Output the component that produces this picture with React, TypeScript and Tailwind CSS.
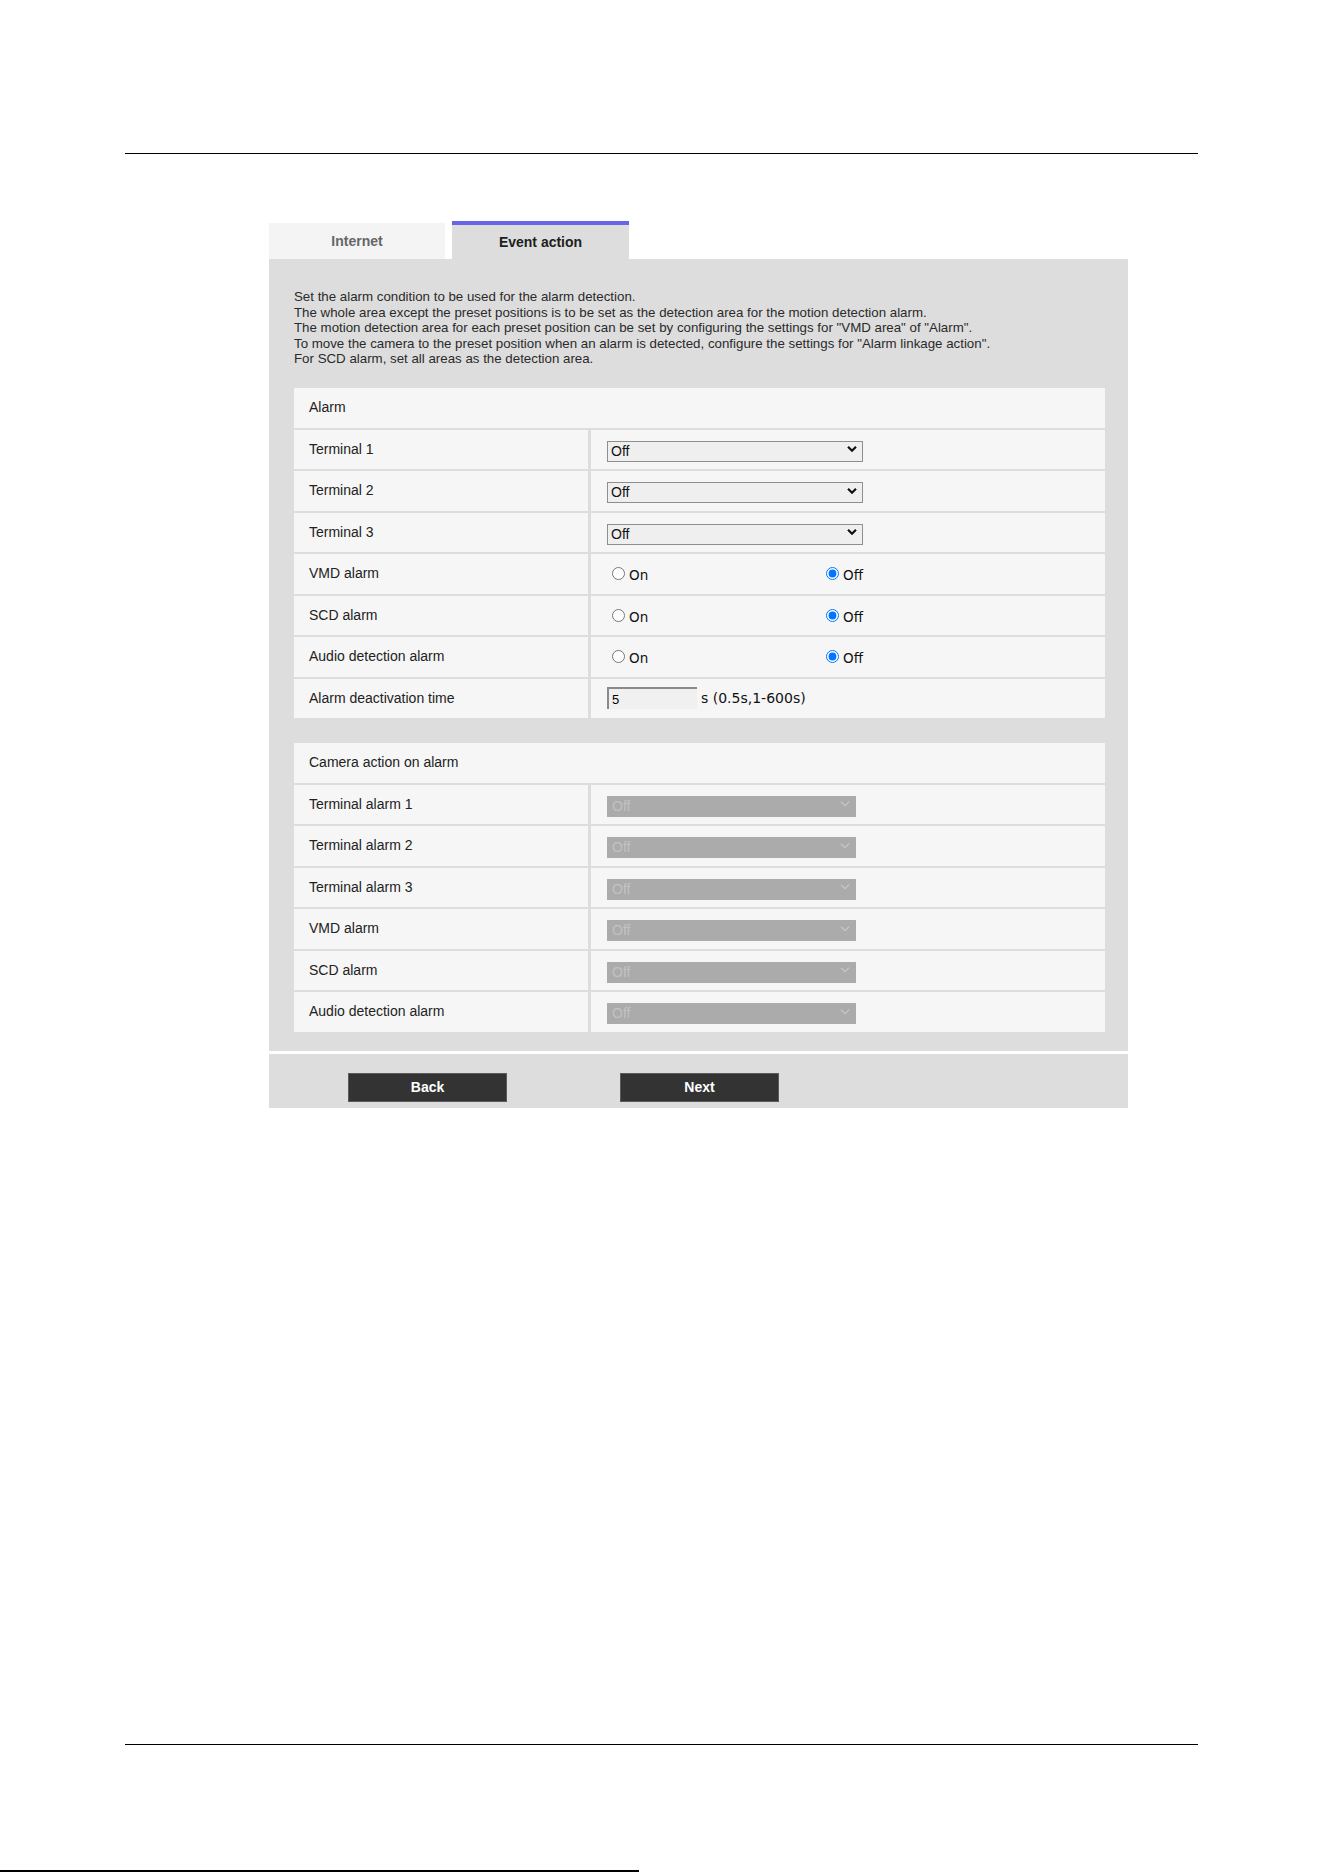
import type { ReactNode } from 'react'

const sans = 'font-["Liberation_Sans",Arial,sans-serif]'
const wide = 'font-["DejaVu_Sans",Verdana,sans-serif]'

const notes = [
  'Set the alarm condition to be used for the alarm detection.',
  'The whole area except the preset positions is to be set as the detection area for the motion detection alarm.',
  'The motion detection area for each preset position can be set by configuring the settings for "VMD area" of "Alarm".',
  'To move the camera to the preset position when an alarm is detected, configure the settings for "Alarm linkage action".',
  'For SCD alarm, set all areas as the detection area.',
]

function Chevron({ disabled }: { disabled?: boolean }) {
  return (
    <svg
      width="10"
      height="7"
      viewBox="0 0 10 7"
      className="pointer-events-none absolute top-1/2 -translate-y-1/2 right-[6px]"
    >
      <path
        d="M1 1.2 L5 5.2 L9 1.2"
        fill="none"
        stroke={disabled ? '#c6c6c6' : '#111'}
        strokeWidth={disabled ? 1.3 : 2.2}
      />
    </svg>
  )
}

function Select({ disabled }: { disabled?: boolean }) {
  if (disabled) {
    return (
      <div className="relative w-[249px] h-[21px]">
        <select
          disabled
          className={`${sans} appearance-none w-full h-full bg-[#ababab] text-[#c2c2c2] text-[14px] leading-[19px] pl-[5px] border-0 outline-none`}
        >
          <option>Off</option>
        </select>
        <Chevron disabled />
      </div>
    )
  }
  return (
    <div className="relative w-[256px] h-[21px]">
      <select
        className={`${sans} appearance-none w-full h-full bg-[#efefef] text-[#111] text-[14px] leading-[19px] pl-[3px] border border-[#8e8e8e] outline-none`}
      >
        <option>Off</option>
        <option>On</option>
      </select>
      <Chevron />
    </div>
  )
}

function OnOff({ name }: { name: string }) {
  return (
    <div className={`${wide} grid grid-cols-[214px_214px] text-[13.5px] text-[#111] pl-[5px]`}>
      <label className="flex items-center gap-[4px]">
        <input type="radio" name={name} className="m-0 w-[13px] h-[13px]" />
        <span className="pt-[3px]">On</span>
      </label>
      <label className="flex items-center gap-[4px]">
        <input type="radio" name={name} defaultChecked className="m-0 w-[13px] h-[13px]" />
        <span className="pt-[3px]">Off</span>
      </label>
    </div>
  )
}

function Row({ label, children }: { label: string; children: ReactNode }) {
  return (
    <div className="flex gap-[3px] h-[39.5px]">
      <div className="w-[294px] bg-[#f6f6f6] flex items-center pl-[15px] text-[14px] text-[#222]">
        {label}
      </div>
      <div className="flex-1 bg-[#f6f6f6] flex items-center pl-[16px]">{children}</div>
    </div>
  )
}

function Section({ title, children }: { title: string; children: ReactNode }) {
  return (
    <div className={`${sans} flex flex-col gap-[2px]`}>
      <div className="h-[39.5px] bg-[#f6f6f6] flex items-center pl-[15px] text-[14px] text-[#222]">
        {title}
      </div>
      {children}
    </div>
  )
}

export default function App() {
  const cameraRows = [
    'Terminal alarm 1',
    'Terminal alarm 2',
    'Terminal alarm 3',
    'VMD alarm',
    'SCD alarm',
    'Audio detection alarm',
  ]

  return (
    <div className={`${sans} bg-white w-[1323px] h-[1872px] pt-[153px]`}>
      {/* page rule */}
      <div className="ml-[125px] w-[1073px] h-px bg-black" />

      {/* tabs */}
      <div className="ml-[269px] mt-[67px] flex items-end gap-[7px] h-[38px]">
        <div className="w-[176px] h-[36px] bg-[#f4f4f4] flex items-center justify-center text-[14px] font-bold text-[#666]">
          Internet
        </div>
        <div className="w-[177px] h-[38px] bg-[#dddddd] border-t-[4px] border-[#6767e6] flex items-center justify-center text-[14px] font-bold text-[#1e1e1e]">
          Event action
        </div>
      </div>

      {/* settings panel */}
      <div className="ml-[269px] w-[859px] bg-[#dddddd] pt-[30px] pl-[25px] pr-[23px] pb-[19px]">
        <div className="text-[13.3px] leading-[15.5px] text-[#2a2a2a] mb-[21.5px]">
          {notes.map((n) => (
            <p key={n}>{n}</p>
          ))}
        </div>

        <Section title="Alarm">
          <Row label="Terminal 1">
            <Select />
          </Row>
          <Row label="Terminal 2">
            <Select />
          </Row>
          <Row label="Terminal 3">
            <Select />
          </Row>
          <Row label="VMD alarm">
            <OnOff name="vmd" />
          </Row>
          <Row label="SCD alarm">
            <OnOff name="scd" />
          </Row>
          <Row label="Audio detection alarm">
            <OnOff name="audio" />
          </Row>
          <Row label="Alarm deactivation time">
            <div className="flex items-center gap-[4px]">
              <input
                defaultValue="5"
                className="w-[90px] h-[22px] bg-[#f0f0f0] border-t-2 border-l-2 border-t-[#8a8a8a] border-l-[#8a8a8a] text-[13px] pl-[3px] outline-none"
              />
              <span className={`${wide} text-[14px] text-[#111]`}>s (0.5s,1-600s)</span>
            </div>
          </Row>
        </Section>

        <div className="h-[25px]" />

        <Section title="Camera action on alarm">
          {cameraRows.map((r) => (
            <Row key={r} label={r}>
              <Select disabled />
            </Row>
          ))}
        </Section>
      </div>

      {/* wizard buttons */}
      <div className="ml-[269px] w-[859px] mt-[3px] h-[54px] bg-[#dddddd] pt-[19px] pl-[79px] flex items-start gap-[113px]">
        <button className="w-[159px] h-[29px] bg-[#333333] border border-[#5a5a5a] text-white text-[14px] font-bold">
          Back
        </button>
        <button className="w-[159px] h-[29px] bg-[#333333] border border-[#5a5a5a] text-white text-[14px] font-bold">
          Next
        </button>
      </div>

      {/* footer rules */}
      <div className="ml-[125px] mt-[636px] w-[1073px] h-px bg-black" />
      <div className="mt-[125px] w-[639px] h-[2px] bg-black" />
    </div>
  )
}
